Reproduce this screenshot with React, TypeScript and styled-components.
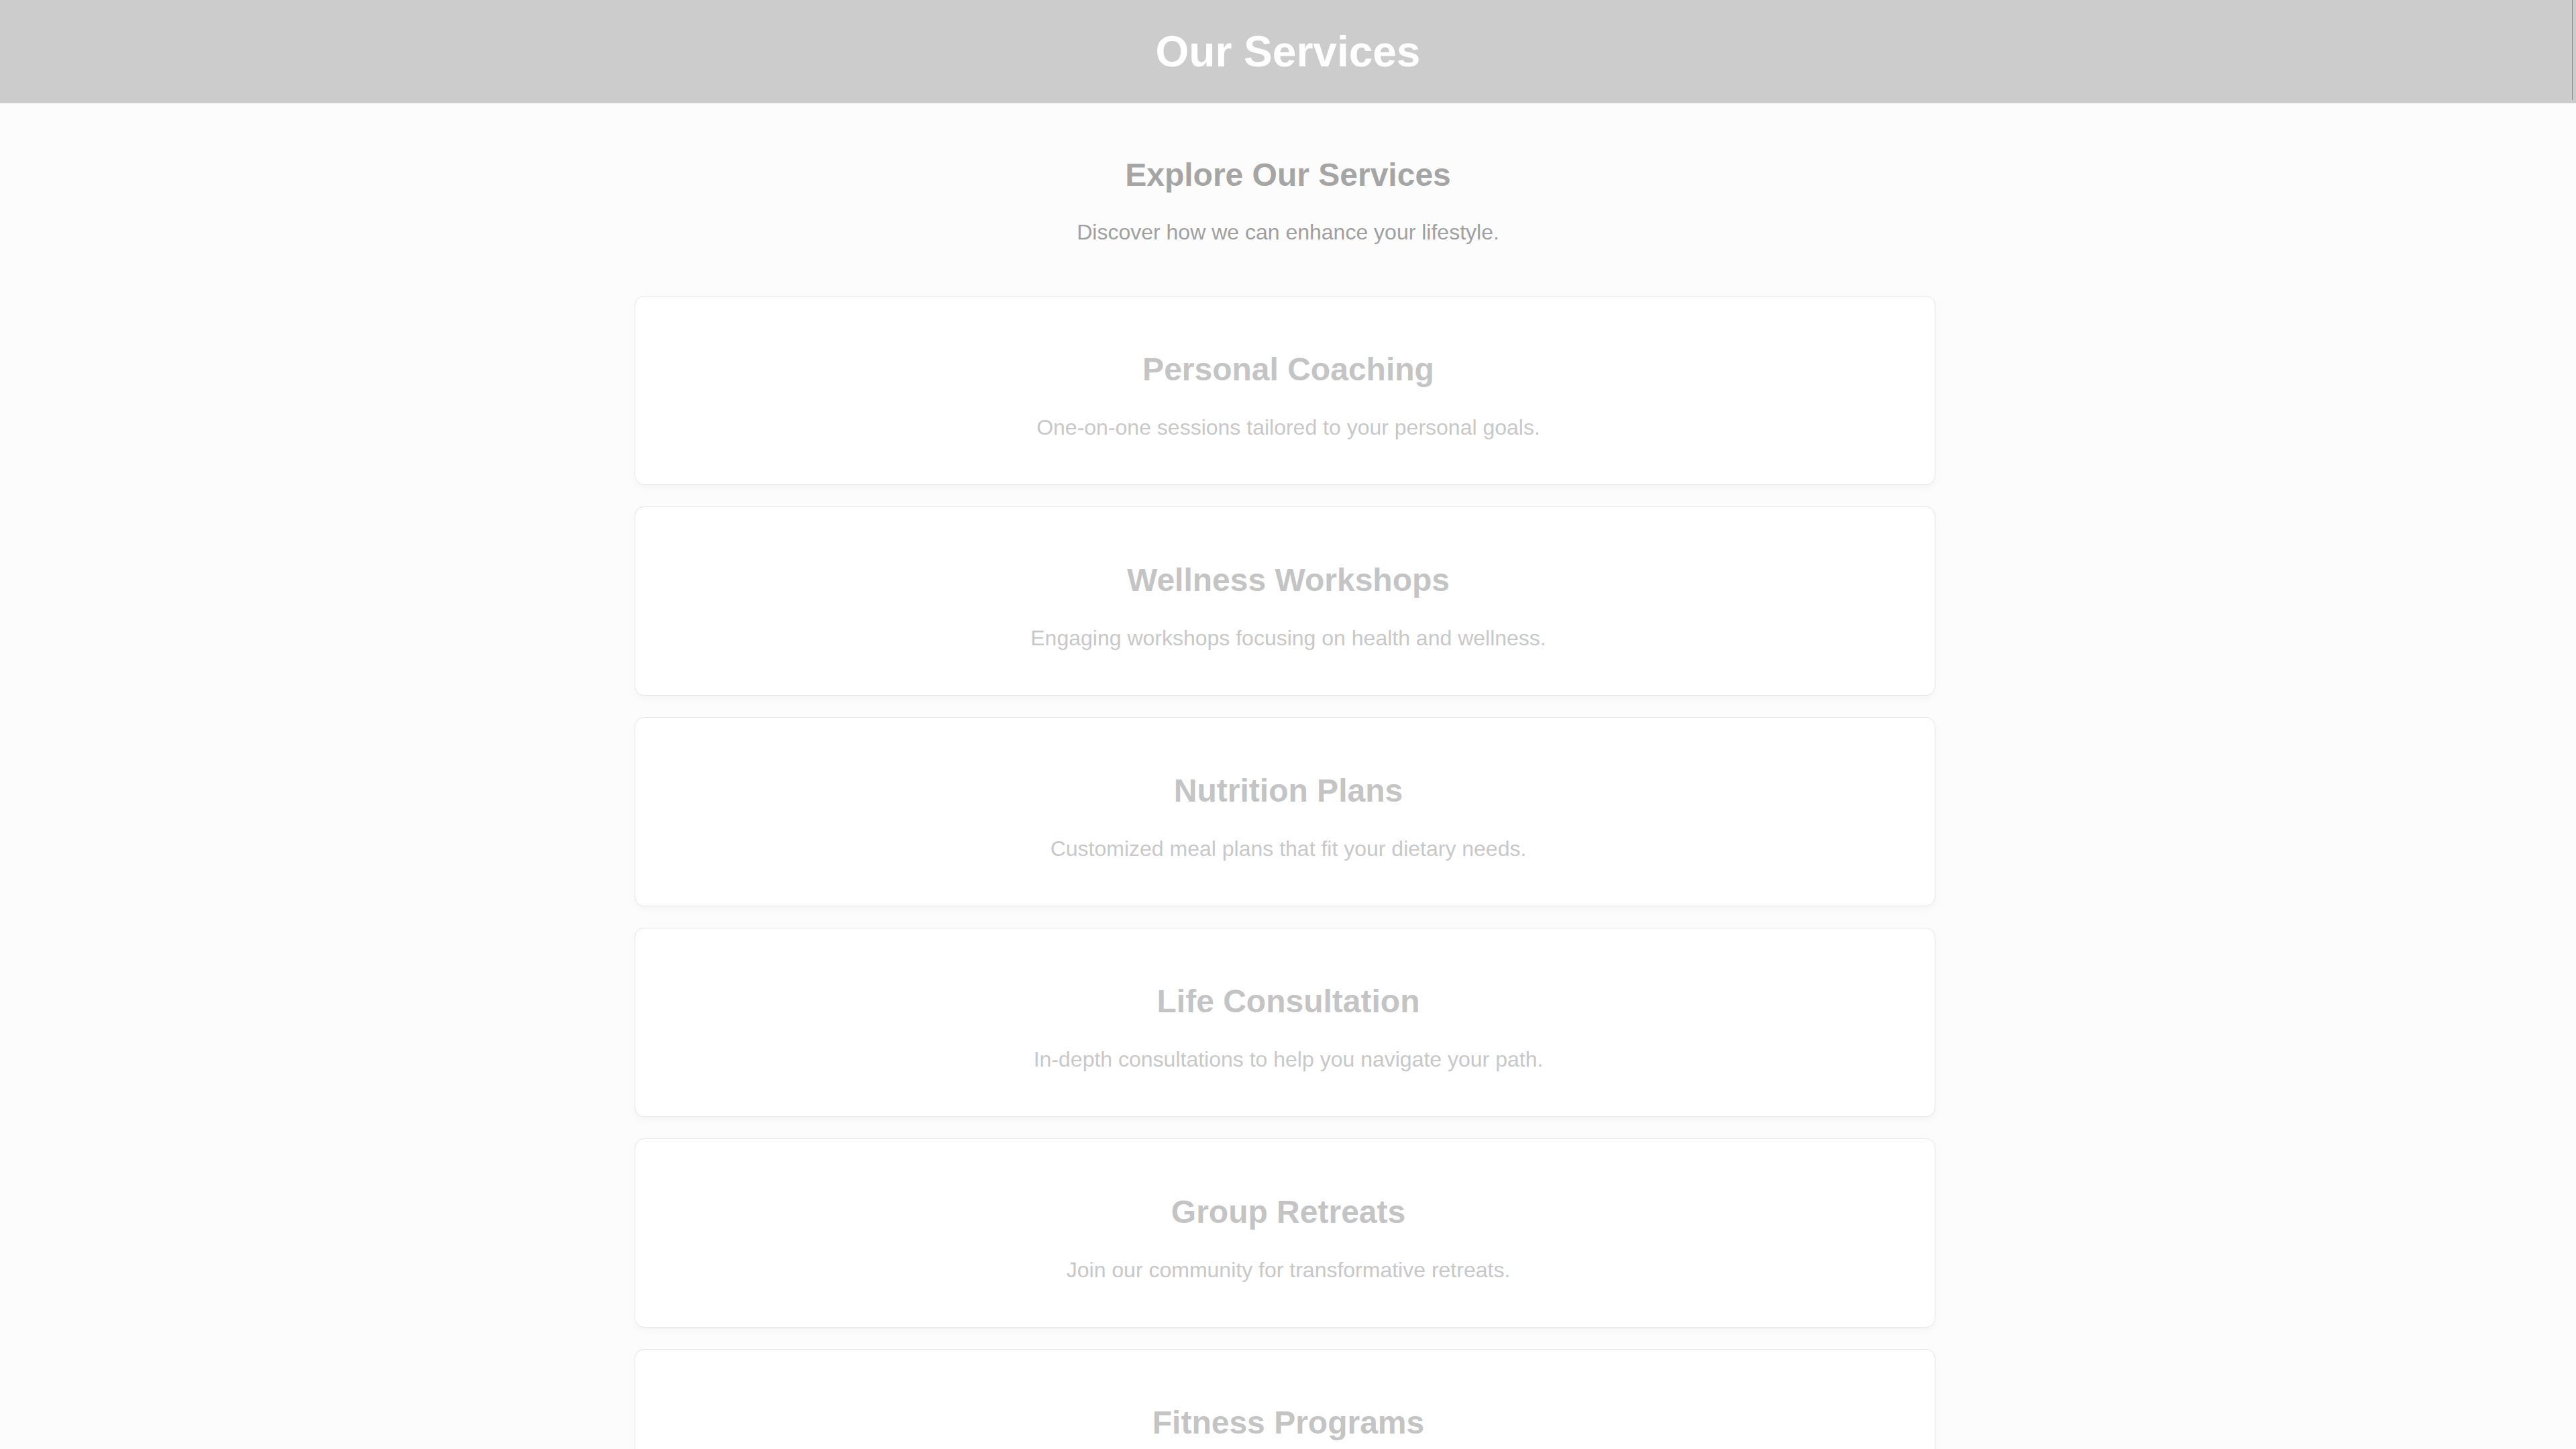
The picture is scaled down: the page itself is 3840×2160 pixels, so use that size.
import React from "react";
import styled, { createGlobalStyle } from "styled-components";

const GlobalStyle = createGlobalStyle`
  html, body {
    margin: 0;
    padding: 0;
    background: #fcfcfc;
    font-family: "Liberation Sans", Arial, Helvetica, sans-serif;
  }
  * { box-sizing: border-box; }
`;

const Header = styled.header`
  position: relative;
  background: #cccccc;
  padding: 40px 0;
  text-align: center;
  &::after {
    content: "";
    position: absolute;
    top: 0;
    right: 5px;
    width: 1px;
    height: 149px;
    background: #8a8a8a;
  }
`;

const HeaderTitle = styled.h1`
  margin: 0;
  color: #ffffff;
  font-size: 64px;
  font-weight: 700;
  line-height: normal;
`;

const Main = styled.main`
  padding: 79px 40px 40px;
  display: flex;
  flex-direction: column;
  align-items: center;
`;

const SectionTitle = styled.h2`
  margin: 0 0 40px;
  color: #a5a5a5;
  font-size: 48px;
  font-weight: 700;
  line-height: normal;
  text-align: center;
`;

const SectionLead = styled.p`
  margin: 0 0 76px;
  color: #a0a0a0;
  font-size: 32px;
  line-height: normal;
  text-align: center;
`;

const CardList = styled.div`
  width: 1949px;
  padding-right: 10px;
  display: flex;
  flex-direction: column;
  gap: 32px;
`;

const Card = styled.section`
  background: #ffffff;
  border: 1px solid #e6e6e6;
  border-radius: 14px;
  box-shadow: 0 4px 12px rgba(0, 0, 0, 0.035);
  padding: 40px 29px 40px 40px;
  text-align: center;
`;

const CardTitle = styled.h3`
  margin: 41px 0 41px;
  color: #c4c4c4;
  font-size: 48px;
  font-weight: 700;
  line-height: normal;
`;

const CardText = styled.p`
  margin: 0 0 26px;
  color: #c8c8c8;
  font-size: 32px;
  line-height: normal;
`;

const services = [
  { title: "Personal Coaching", text: "One-on-one sessions tailored to your personal goals." },
  { title: "Wellness Workshops", text: "Engaging workshops focusing on health and wellness." },
  { title: "Nutrition Plans", text: "Customized meal plans that fit your dietary needs." },
  { title: "Life Consultation", text: "In-depth consultations to help you navigate your path." },
  { title: "Group Retreats", text: "Join our community for transformative retreats." },
  { title: "Fitness Programs", text: "Structured programs to keep you active and strong." },
];

export default function App() {
  return (
    <>
      <GlobalStyle />
      <Header>
        <HeaderTitle>Our Services</HeaderTitle>
      </Header>
      <Main>
        <SectionTitle>Explore Our Services</SectionTitle>
        <SectionLead>Discover how we can enhance your lifestyle.</SectionLead>
        <CardList>
          {services.map((s) => (
            <Card key={s.title}>
              <CardTitle>{s.title}</CardTitle>
              <CardText>{s.text}</CardText>
            </Card>
          ))}
        </CardList>
      </Main>
    </>
  );
}
